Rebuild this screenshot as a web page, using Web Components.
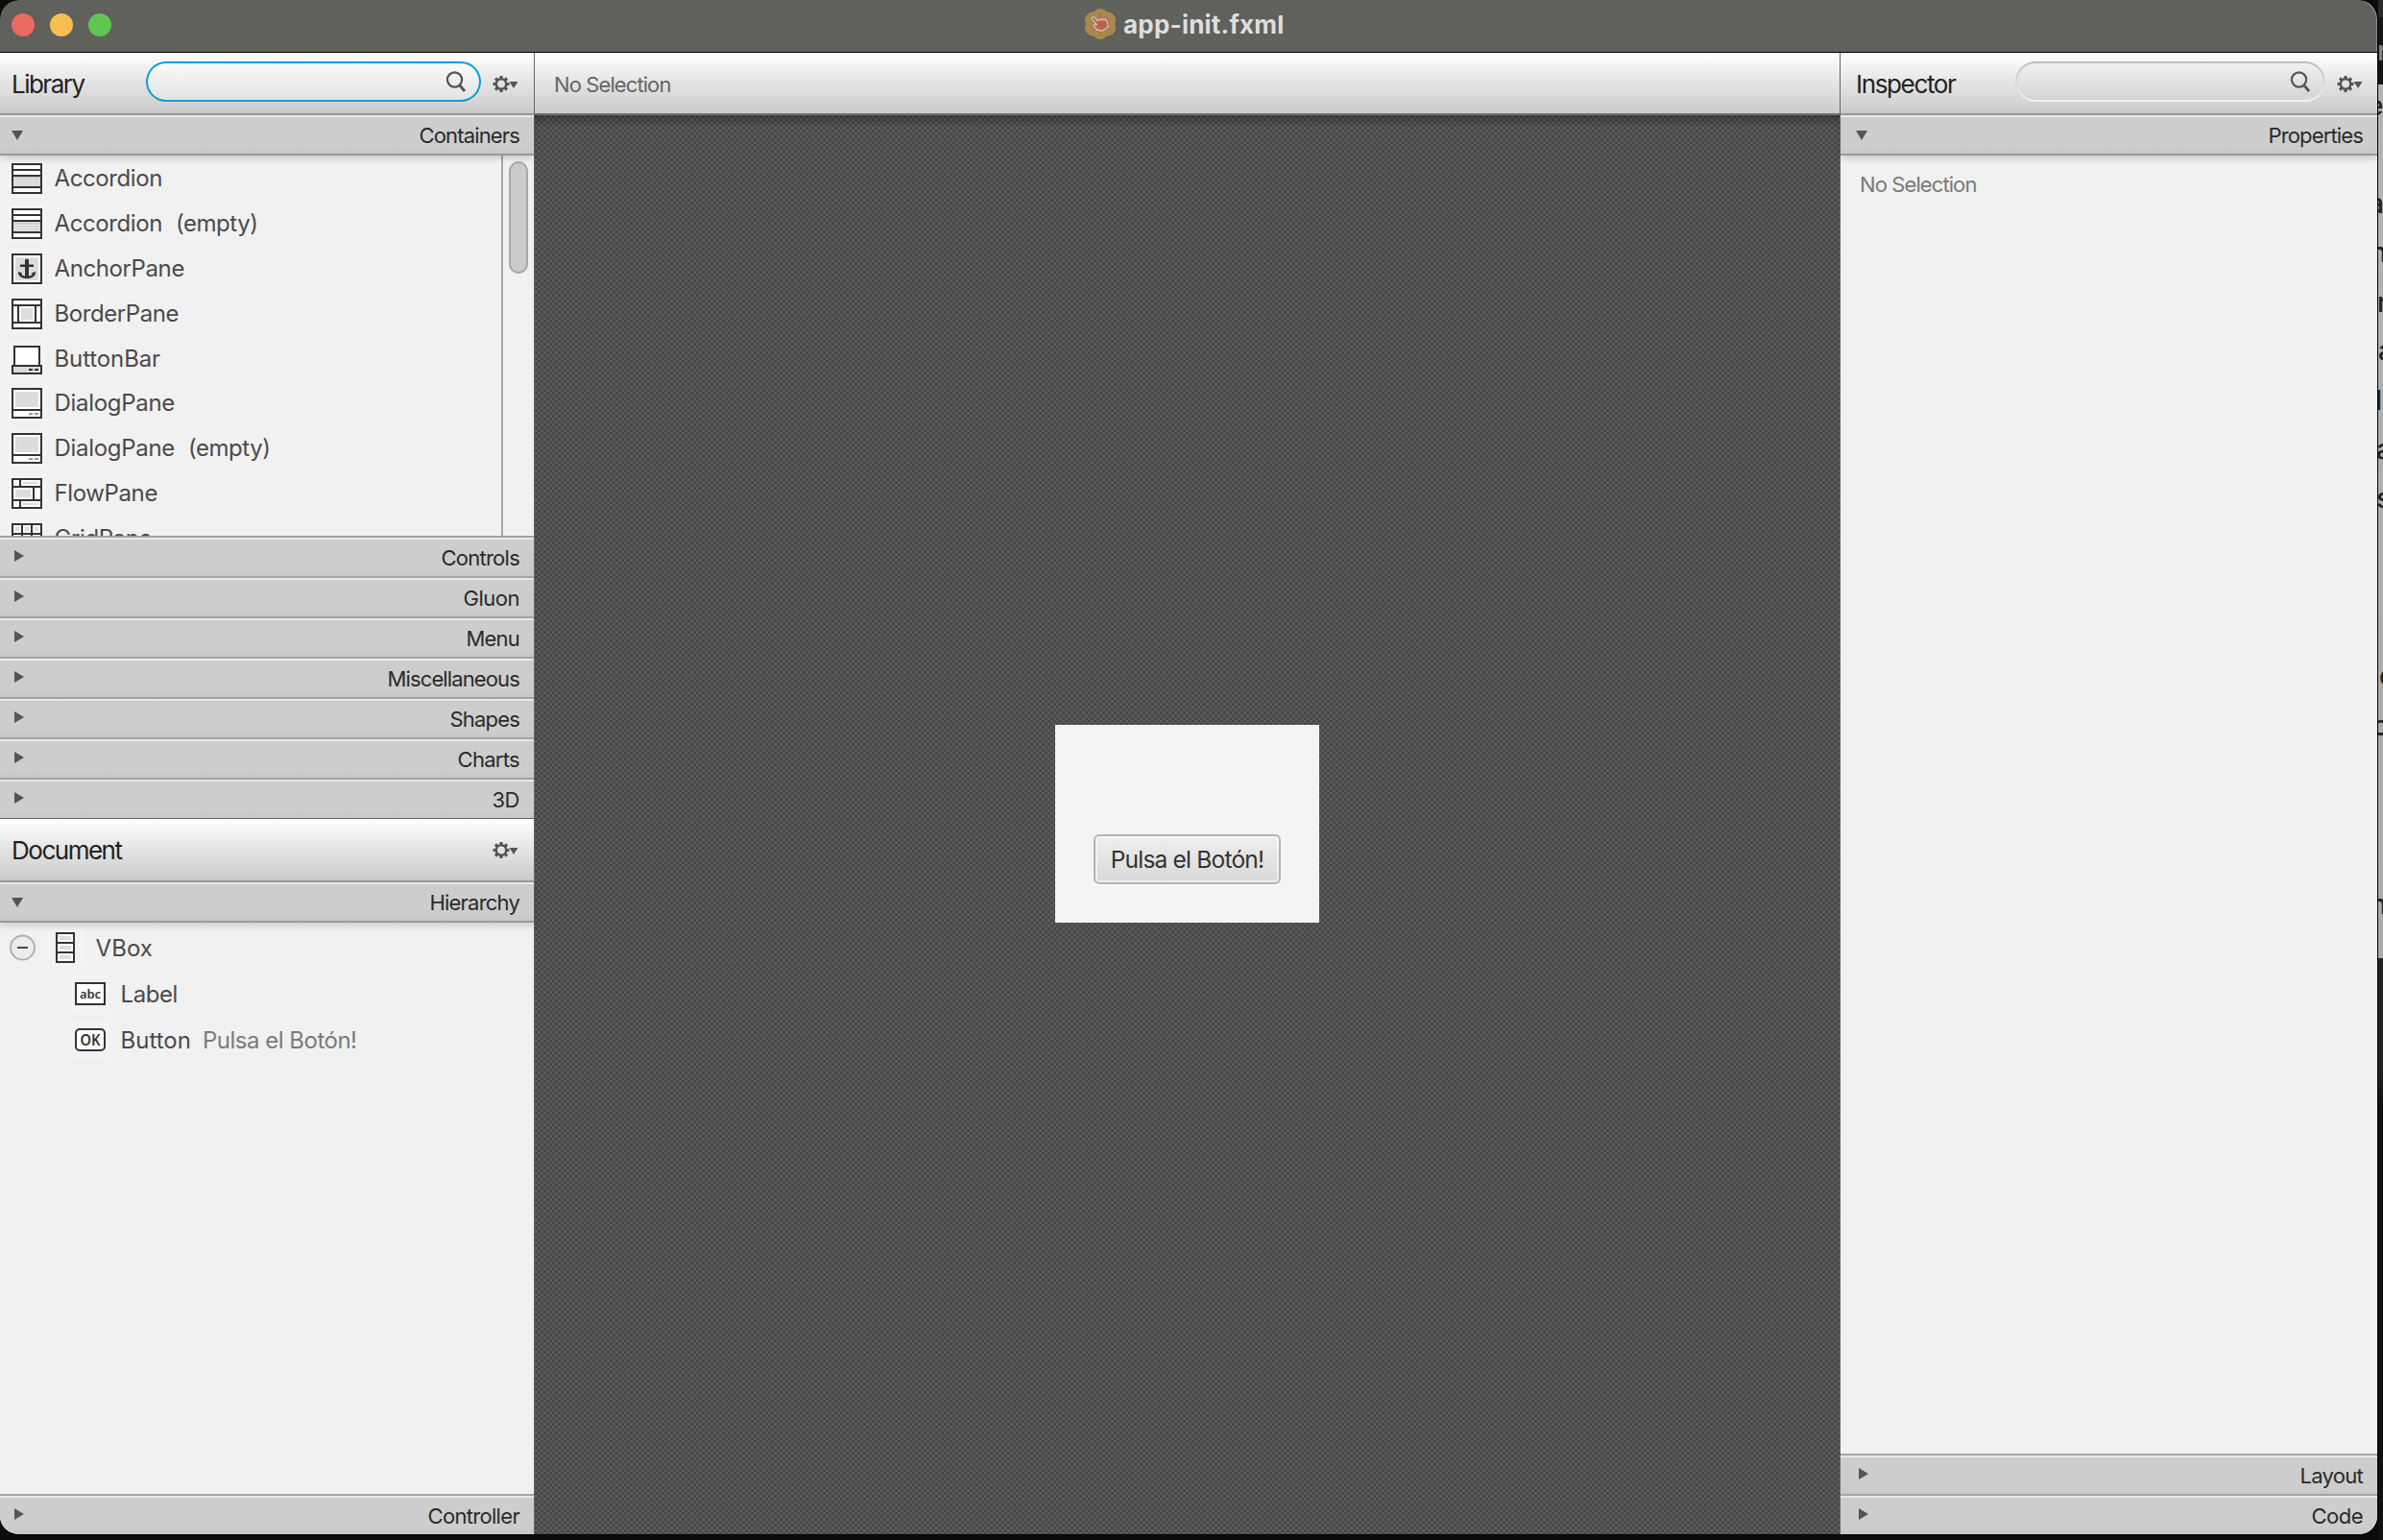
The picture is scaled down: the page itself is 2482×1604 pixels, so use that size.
<!DOCTYPE html>
<html lang="es">
<head>
<meta charset="utf-8">
<title>app-init.fxml</title>
<style>
html,body{margin:0;width:2482px;height:1604px;overflow:hidden;background:#0c0c0d;font-family:Inter,"Liberation Sans",sans-serif}
</style>
</head>
<body>
<builder-app></builder-app>
<script>
const define = (name, css, html, ready) => customElements.define(name, class extends HTMLElement {
  constructor() {
    super();
    const root = this.attachShadow({mode: 'open'});
    root.innerHTML = `<style>*{box-sizing:border-box}svg{display:block}${css}</style>` + (typeof html === 'function' ? html(this) : html);
  }
  connectedCallback() { if (ready) ready(this, this.shadowRoot); }
});

/* Text run whose tracking is tuned to a given ink width. */
define('fit-text', `:host{display:block;white-space:pre;line-height:1;flex:none}span{display:inline-block}`, '<span></span>', (el, root) => {
  const s = root.querySelector('span');
  s.textContent = el.getAttribute('text');
  const n = s.textContent.length;
  s.style.letterSpacing = ((+el.getAttribute('w') + 1.5 - s.getBoundingClientRect().width) / n) + 'px';
});

const D = '#333', G = '#dcdcdc';
const r = (x, y, w, h, f = D) => `<rect x="${x}" y="${y}" width="${w}" height="${h}" fill="${f}"/>`;
const box = r(0, 0, 32, 32) + r(2, 2, 28, 28, '#fff');
const icons = {
  accordion: box + r(0,6,32,2) + r(0,12,32,2) + r(2,14,28,10,G) + r(2,14,28,2,'#cfcfcf') + r(0,24,32,2),
  anchor: box + r(4,4,24,24,G) + `<path d="M9 12.8h14M8 20c1 3.600 4 5 8 5s7-1.400 8-5" fill="none" stroke="#333" stroke-width="2.400"/><path d="M14 6.500l2-1 2 1v19h-4z" fill="#333"/><path d="M7 19l4.500 1.500L8 23.500zM25 19l-4.500 1.500L24 23.500z" fill="#333"/>`,
  border: box + r(0,6,32,2) + r(0,24,32,2) + r(6,8,2,16) + r(24,8,2,16) + r(10,10,12,12,G),
  buttonbar: r(2,2,28,22) + r(4,4,24,18,'#fff') + r(0,22,32,10) + r(2,24,28,6,G) + r(18,26,4,2) + r(24,26,4,2),
  dialog: box + r(4,4,24,16,G) + r(0,22,32,2) + r(18,26,4,2,'#999') + r(24,26,4,2,'#999'),
  flow: box + r(0,8,32,2) + r(0,22,32,2) + r(8,0,2,8) + r(12,4,16,2,G) + r(22,10,2,12) + r(4,12,16,8,G) + r(8,24,2,6) + r(12,26,16,2,G),
  grid: box + [10,20].map(v => r(v,0,2,32) + r(0,v,32,2)).join('') + [4,14,24].map(x => [4,14,24].map(y => r(x,y,4,4,G)).join('')).join(''),
  vbox: r(6,0,20,32) + [2,12,22].map(y => r(8,y,16,8,'#fff') + r(10,y+2,12,4,G)).join(''),
  label: r(0,4,32,24) + r(2,6,28,20,'#fff') + `<text x="16" y="21" text-anchor="middle" textLength="22" font-family="Noto Sans" font-weight="600" font-size="13" fill="#333">abc</text>`,
  button: `<rect x="1" y="5" width="30" height="22" rx="4" fill="#fff" stroke="#333" stroke-width="2"/><text x="16" y="21.500" text-anchor="middle" textLength="21" lengthAdjust="spacingAndGlyphs" font-family="Noto Sans" font-weight="600" font-size="16" fill="#333">OK</text>`
};
define('item-icon', `:host{display:block;width:32px;height:32px;flex:none;box-shadow:0 0 0 3px #f4f4f4}`,
  '<svg width="32" height="32"></svg>',
  (el, root) => { root.querySelector('svg').innerHTML = icons[el.getAttribute('name')]; });

define('gear-menu', `:host{display:block;flex:none;width:27px;height:18px}`, (() => {
  let teeth = '';
  for (let i = 0; i < 8; i++) teeth += `<rect x="7.400" y="1" width="3.200" height="4" transform="rotate(${i * 45} 9 9.500)"/>`;
  return `<svg width="27" height="18" fill="#555">${teeth}<circle cx="9" cy="9.500" r="5.200" fill="none" stroke="#555" stroke-width="2.400"/><path d="M17.500 7h9l-4.500 7z"/></svg>`;
})());

define('search-field', `
:host{display:block;flex:none;height:42px;margin-top:-3px}
.f{height:42px;border:2px solid transparent;border-radius:21px;display:flex;align-items:center;justify-content:flex-end;padding-right:13px;
background:linear-gradient(#f0f0f0,#d4d4d4) padding-box,linear-gradient(#bdbdbd,#d8d8d8 50%,#f4f4f4) border-box}
:host([focused]) .f{background:linear-gradient(#fafafa,#e3e3e3) padding-box,linear-gradient(#069fd8,#069fd8) border-box}`,
`<div class="f"><svg width="22" height="24" fill="none" stroke="#555" stroke-width="2.200"><circle cx="9.500" cy="10" r="7.600"/><path d="M14.500 15.500l5.500 6.500" stroke-width="2.800"/></svg></div>`);

define('tool-header', `
:host{display:flex;align-items:center;flex:none;height:65px;padding:2px 16px 2px 12px;border-bottom:2px solid #a0a0a0;background:linear-gradient(#fff,#e4e4e4 50%,#cbcbcb);font-size:26px;color:#222;gap:12px}
:host([tall]){height:66px}
::slotted(fit-text){margin-top:2px}
i{flex:1}`, '<slot name="title"></slot><i></i><slot></slot>');

define('section-header', `
:host{display:flex;flex:none;align-items:center;justify-content:space-between;height:42px;padding:0 15px 0 12px;border-top:2px solid #e9e9e9;border-bottom:2px solid #a3a3a3;background:linear-gradient(#cdcdcd 80%,#c8c8c8);font-size:22px;color:#2a2a2a}
:host([open]){border-bottom-color:#999;position:relative;box-shadow:0 2px 8px rgba(0,0,0,.2)}
:host([last]){border-bottom:0;height:40px;padding-bottom:0}
:host([side=right]){padding-left:16px}
svg{margin-top:-4px}:host([open]) svg{margin-top:0}:host(:not([open])) svg{margin-left:3px}
fit-text{margin-top:-1px}`, '<svg></svg><fit-text></fit-text>', (el, root) => {
  const open = el.hasAttribute('open');
  const s = root.querySelector('svg');
  s.setAttribute('width', 12); s.setAttribute('height', 12);
  s.innerHTML = open ? '<path d="M0 1h12L6 11z" fill="#555"/>' : '<path d="M0 0v12l10-6z" fill="#555"/>';
  const t = document.createElement('fit-text');
  t.setAttribute('text', el.getAttribute('text')); t.setAttribute('w', el.getAttribute('w'));
  root.querySelector('fit-text').replaceWith(t);
});

define('library-item', `
:host{display:flex;flex:none;align-items:center;height:46.800px;padding-left:12px;font-size:24px;color:#4a4a4a}
item-icon{margin-right:12.500px}.q{margin-left:14px}`, '', (el, root) => {
  const a = k => el.getAttribute(k);
  root.innerHTML += `<item-icon name="${a('icon')}"></item-icon><fit-text text="${a('text')}" w="${a('w')}"></fit-text>` +
    (a('note') ? `<fit-text class="q" text="${a('note')}" w="84"></fit-text>` : '');
});

define('tree-row', `
:host{display:flex;flex:none;align-items:center;height:48px;font-size:24px;color:#4a4a4a;padding-left:78px}
:host([root]){padding-left:10px}
:host([root]) item-icon{margin-left:15px;margin-right:15.500px}
item-icon{margin-right:15.500px}.d{margin-left:12px;color:#7b7b7b}
fit-text{margin-top:1px}`, '', (el, root) => {
  const a = k => el.getAttribute(k);
  root.innerHTML += (el.hasAttribute('root') ? '<svg width="27" height="28"><circle cx="13.500" cy="14" r="12.500" fill="#ececec" stroke="#b0b0b0" stroke-width="2"/><path d="M8 14h11" stroke="#444" stroke-width="2"/></svg>' : '') +
    `<item-icon name="${a('icon')}"></item-icon><fit-text text="${a('text')}" w="${a('w')}"></fit-text>` +
    (a('detail') ? `<fit-text class="d" text="${a('detail')}" w="159"></fit-text>` : '');
});

define('scroll-rail', `:host{display:block;flex:none;width:34px;border-left:2px solid #a8a8a8;padding:6px}
div{width:20px;height:117px;border:2px solid #a8a8a8;border-radius:10px;background:#cbcbcb}`, '<div></div>');

define('left-side', `
:host{display:flex;flex-direction:column;width:557px;border-right:1px solid #666;background:#f1f1f1;flex:none}
.lib{display:flex;height:398px;border-bottom:2px solid #a3a3a3;overflow:hidden;flex:none}
.list{flex:1;display:flex;flex-direction:column;padding-top:1px}
.split{height:1px;background:#666;flex:none}
.tree{flex:1;border-bottom:2px solid #a3a3a3;padding-top:2px}`, `
<tool-header><fit-text slot="title" text="Library" w="74"></fit-text><search-field focused style="width:349px"></search-field><gear-menu></gear-menu></tool-header>
<section-header open text="Containers" w="103"></section-header>
<div class="lib"><div class="list">
<library-item icon="accordion" text="Accordion" w="111"></library-item>
<library-item icon="accordion" text="Accordion" w="111" note="(empty)"></library-item>
<library-item icon="anchor" text="AnchorPane" w="134"></library-item>
<library-item icon="border" text="BorderPane" w="128"></library-item>
<library-item icon="buttonbar" text="ButtonBar" w="109"></library-item>
<library-item icon="dialog" text="DialogPane" w="124"></library-item>
<library-item icon="dialog" text="DialogPane" w="124" note="(empty)"></library-item>
<library-item icon="flow" text="FlowPane" w="106"></library-item>
<library-item icon="grid" text="GridPane" w="100"></library-item>
</div><scroll-rail></scroll-rail></div>
<section-header text="Controls" w="80"></section-header>
<section-header text="Gluon" w="57"></section-header>
<section-header text="Menu" w="54"></section-header>
<section-header text="Miscellaneous" w="136"></section-header>
<section-header text="Shapes" w="71"></section-header>
<section-header text="Charts" w="63"></section-header>
<section-header last text="3D" w="27"></section-header>
<div class="split"></div>
<tool-header tall><fit-text slot="title" text="Document" w="113"></fit-text><gear-menu></gear-menu></tool-header>
<section-header open text="Hierarchy" w="92"></section-header>
<div class="tree">
<tree-row root icon="vbox" text="VBox" w="58"></tree-row>
<tree-row icon="label" text="Label" w="58"></tree-row>
<tree-row icon="button" text="Button" w="72" detail="Pulsa el Botón!"></tree-row>
</div>
<section-header last text="Controller" w="94"></section-header>`);

define('fx-canvas', `
:host{display:flex;flex-direction:column;flex:1}
.bar{display:flex;align-items:center;height:65px;border-bottom:2px solid #707070;background:linear-gradient(#fff,#e4e4e4 50%,#cbcbcb);padding:2px 0 0 20px;font-size:22px;color:#666;flex:none}
.work{flex:1;display:flex;align-items:center;justify-content:center;
background:linear-gradient(rgba(0,0,0,.28),transparent) 0 0/100% 12px no-repeat,conic-gradient(#5a5a5a 25%,#484848 0 50%,#5a5a5a 0 75%,#484848 0) 0 0/6px 6px}
.scene{width:275px;height:206px;background:#f4f4f4;display:flex;align-items:flex-end;justify-content:center;padding-bottom:40px;margin-top:-2px}
.btn{width:195px;height:52px;border:2px solid #b4b4b4;border-radius:6px;background:linear-gradient(#efefef,#d8d8d8);box-shadow:inset 0 0 0 2px #f8f8f8a0,inset 0 2px 0 #fff,0 2px 0 #fff;display:flex;align-items:center;justify-content:center;font-size:24.500px;color:#333}`,
`<div class="bar"><fit-text text="No Selection" w="120"></fit-text></div>
<div class="work"><div class="scene"><div class="btn"><fit-text text="Pulsa el Botón!" w="158"></fit-text></div></div></div>`);

define('right-side', `
:host{display:flex;flex-direction:column;width:560px;border-left:1px solid #666;background:#f1f1f1;flex:none}
tool-header{padding-left:16px;padding-right:15px}
.props{flex:1;border-bottom:2px solid #a3a3a3;font-size:22px;color:#7a7a7a;padding:19px 0 0 20px}`, `
<tool-header><fit-text slot="title" text="Inspector" w="102"></fit-text><search-field style="width:323px"></search-field><gear-menu></gear-menu></tool-header>
<section-header side="right" open text="Properties" w="97"></section-header>
<div class="props"><fit-text text="No Selection" w="120"></fit-text></div>
<section-header side="right" text="Layout" w="64"></section-header>
<section-header side="right" last text="Code" w="52"></section-header>`);

define('title-bar', `
:host{display:flex;align-items:center;height:55px;border-bottom:1px solid #000;background:#60605d;flex:none;box-shadow:inset -2px 1px 0 -1px #8a8a88;border-radius:20px 20px 0 0;padding:0 0 3px 12px}
i{width:24px;height:24px;border-radius:50%;margin-right:16px}
.t{display:flex;align-items:center;gap:8px;margin-left:998px;margin-top:-2px;font-size:26px;font-weight:700;color:#dededd}
fit-text{margin-top:2px}`,
`<i style="background:#ed6a5e"></i><i style="background:#f5bf4f"></i><i style="background:#61c554"></i>
<div class="t"><svg width="32" height="32" viewBox="0 0 32 32"><g fill="#a98a4e"><circle cx="16" cy="8" r="8"/><circle cx="16" cy="24" r="8"/><circle cx="8.500" cy="12" r="8.500"/><circle cx="23.500" cy="12" r="8.500"/><circle cx="8.500" cy="20" r="8.500"/><circle cx="23.500" cy="20" r="8.500"/></g><path d="M16 3l4 6 8 1-3 6 3 6-8 1-4 6-4-6-8-1 3-6-3-6 8-1z" fill="#b07a50"/><path d="M7.500 9.500c1-1 2.300-.6 3 .3l3 3 .8-1.600 2.400.8 1-1.400 2.200 1.200 1.300-.8 2 2.200.8 5.800-5.500 4-6-1-3.500-4.500 1.300-1.200 2.200.5-5-5.500c-.5-.7-.5-1.300 0-1.800z" fill="#b9624a" stroke="#cfc3b8" stroke-width="1.300" stroke-linejoin="round"/></svg><fit-text text="app-init.fxml" w="166"></fit-text></div>`);

define('back-window', `
:host{display:block;position:absolute;left:2477px;top:0;width:5px;height:1604px;overflow:hidden;background:linear-gradient(#2b2b2b 18px,#161616 18px 88px,#b4b4b4 88px,#aaa 998px,#242424 998px 1110px,#111 1155px)}
svg{font-family:Inter,sans-serif;font-size:28px;font-weight:500}`,
`<svg width="5" height="1604" fill="#222"><text x="-1" y="63" fill="#888">n</text><text x="-11" y="120">e</text><text x="-10" y="222">a</text><text x="-8" y="273">n</text><text x="-1" y="325">r</text><text x="0" y="375">a</text><text x="-3" y="427">l</text><text x="-2" y="478">a</text><text x="-2" y="529">s</text><text x="1" y="714">e</text><text x="-6" y="766">o</text><text x="-8" y="952">n</text></svg>`);

define('builder-app', `
:host{display:block;position:relative;width:2482px;height:1604px;overflow:hidden}
.win{width:2477px;height:1599px;border-right:1px solid #000;border-bottom:1px solid #000;border-radius:20px;overflow:hidden;display:flex;flex-direction:column}
.body{flex:1;display:flex;min-height:0}`,
`<back-window></back-window><div class="win"><title-bar></title-bar><div class="body"><left-side></left-side><fx-canvas></fx-canvas><right-side></right-side></div></div>`);
</script>
</body>
</html>
